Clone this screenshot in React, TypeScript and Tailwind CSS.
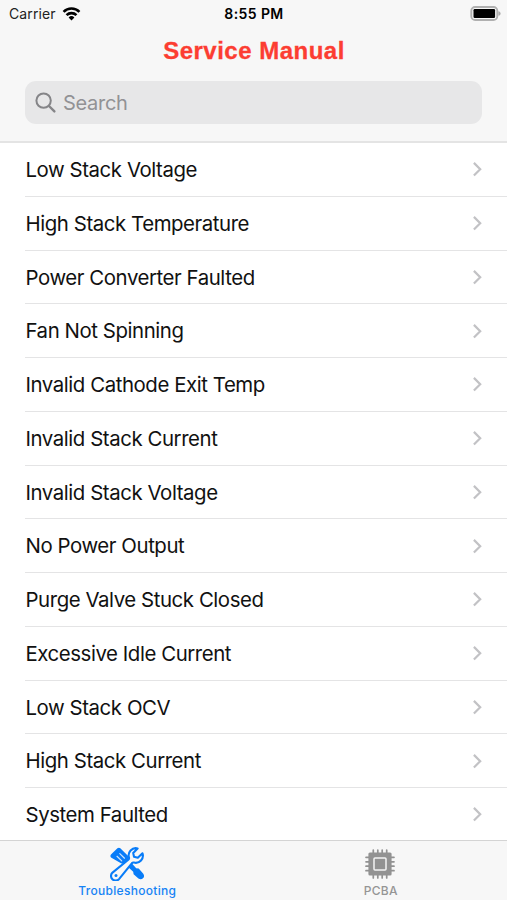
import React, { useState } from 'react';

interface Tab {
  id: string;
  label: string;
  icon: React.ReactNode;
}

const FAULTS = [
  'Low Stack Voltage',
  'High Stack Temperature',
  'Power Converter Faulted',
  'Fan Not Spinning',
  'Invalid Cathode Exit Temp',
  'Invalid Stack Current',
  'Invalid Stack Voltage',
  'No Power Output',
  'Purge Valve Stuck Closed',
  'Excessive Idle Current',
  'Low Stack OCV',
  'High Stack Current',
  'System Faulted',
];

const WifiIcon = () => (
  <svg width="19" height="14" viewBox="0 0 20 15" fill="none" stroke="#000" strokeWidth="2.8">
    <path d="M1.5 5.2a12 12 0 0 1 17 0" />
    <path d="M4.7 8.7a7.5 7.5 0 0 1 10.6 0" />
    <path d="M10 14.4 6.9 11.3a4.4 4.4 0 0 1 6.2 0Z" fill="#000" stroke="none" />
  </svg>
);

const BatteryIcon = () => (
  <svg width="32" height="16" viewBox="0 0 32 16">
    <rect x="1.3" y="1" width="26" height="13" rx="3.8" fill="#f7f7f7" stroke="#b0b0b0" strokeWidth="1.9" />
    <rect x="3.5" y="3" width="21.6" height="9" rx="1.2" fill="#000" />
    <path d="M28.4 5.2c1.5.4 2.2 1.2 2.2 2.3s-.7 1.9-2.2 2.3Z" fill="#aaa" />
  </svg>
);

const SearchIcon = () => (
  <svg width="22" height="22" viewBox="0 0 22 22" fill="none" stroke="#858588" strokeWidth="2" strokeLinecap="round">
    <circle cx="8.6" cy="8.6" r="7.2" />
    <path d="m14 14 5.4 5.4" strokeWidth="2.4" />
  </svg>
);

const ChevronIcon = () => (
  <svg width="10" height="16" viewBox="0 0 10 16" fill="none" stroke="#c2c2c5" strokeWidth="2.2">
    <path d="m.9 1.9 6.3 6.3-6.3 6.3" />
  </svg>
);

// Screwdriver crossed under an outlined wrench
const ToolsIcon = () => (
  <svg width="34" height="34" viewBox="0 0 34 34" fill="none" strokeLinejoin="round">
    <path d="M1 7.6 7.4 1.2Q8.9.2 10.3 1.2l7.6 7.6q1.3 1.6.3 3.4l8 9.1 2.5.3 4.6 5.1q1.6 2.7-.3 4.6t-4.6.3l-4.8-4.3-.4-2.6-9.5-8.8q-2 1.2-3.6-.1L1 10.5q-1.2-1.4 0-2.9Z" fill="#087cf8" />
    <path d="m7 9.3 4.7 4.6M9.8 6.6l4.7 4.6" stroke="#cfe4fb" strokeWidth="1.2" strokeLinecap="round" />
    <path
      d="M27.6 1.4a7.2 7.2 0 0 0-8.6 9.2q.3 1.2-.7 2.1L2.5 25.6a4.6 4.6 0 1 0 6.5 6.5L21.8 16.3q.9-1 2.2-.7a7.2 7.2 0 0 0 8.5-9.3l-4.7 4.4-3.8-1-.8-3.8Z"
      fill="#f7f7f7"
      stroke="#087cf8"
      strokeWidth="2.1"
    />
    <circle cx="6" cy="28.4" r="1.5" fill="#087cf8" />
  </svg>
);

const ChipIcon = () => (
  <svg width="30" height="30" viewBox="0 0 30 30" fill="none" stroke="#929292">
    <path d="M8.3 1v28M12.8 1v28M17.2 1v28M21.7 1v28M1 8.3h28M1 12.8h28M1 17.2h28M1 21.7h28" strokeWidth="1.7" strokeLinecap="round" />
    <rect x="3.4" y="3.4" width="23.2" height="23.2" rx="1.5" fill="#929292" stroke="none" />
    <rect x="9" y="9" width="12" height="12" rx="1" stroke="#f4f4f4" strokeWidth="1.5" />
  </svg>
);

const TABS: Tab[] = [
  { id: 'troubleshooting', label: 'Troubleshooting', icon: <ToolsIcon /> },
  { id: 'pcba', label: 'PCBA', icon: <ChipIcon /> },
];

const App: React.FC = () => {
  const [query, setQuery] = useState('');
  const [activeTab, setActiveTab] = useState('troubleshooting');

  const visible = FAULTS.filter(f => f.toLowerCase().includes(query.toLowerCase()));

  return (
    <div className="flex h-[900px] w-[507px] flex-col overflow-hidden bg-white font-['Inter',sans-serif] text-black">
      <header className="h-[143px] shrink-0 border-b-2 border-[#e4e4e4] bg-[#f7f7f7]">
        {/* Status bar */}
        <div className="grid h-[27px] grid-cols-3 items-center pl-[9px] pr-[5px]">
          <div className="flex items-center gap-[6px] text-[14px] tracking-[0.1px] text-[#222]">
            <span>Carrier</span>
            <WifiIcon />
          </div>
          <div className="-ml-[3px] text-center text-[14px] font-semibold tracking-[0.4px]">8:55 PM</div>
          <div className="flex justify-end">
            <BatteryIcon />
          </div>
        </div>

        <h1 className="h-[54px] pl-px text-center font-['Liberation_Sans',sans-serif] text-[24px] leading-[48px] font-bold tracking-[0.5px] text-[#fc3d32] [-webkit-text-stroke:0.3px_#fc3d32]">
          Service Manual
        </h1>

        <label className="mx-[25px] flex h-[43px] items-center gap-[6px] rounded-[11px] bg-[#e7e7e8] pl-[10px]">
          <SearchIcon />
          <input
            value={query}
            onChange={e => setQuery(e.target.value)}
            placeholder="Search"
            className="min-w-0 flex-1 bg-transparent text-[20px] tracking-[-0.3px] outline-none placeholder:text-[#929295]"
          />
        </label>
      </header>

      <ul className="min-h-0 flex-1 overflow-hidden">
        {visible.map(fault => (
          <li key={fault} className="ml-[25px] flex h-[53.75px] items-center justify-between border-b border-[#e4e4e5] pr-6">
            <span className="pt-[2px] pl-[0.5px] text-[20.4px] tracking-[-0.43px] text-[#111]">{fault}</span>
            <ChevronIcon />
          </li>
        ))}
      </ul>

      <nav className="grid h-[60px] shrink-0 grid-cols-2 border-t border-[#d4d4d4] bg-[#f7f7f7]">
        {TABS.map(tab => (
          <button
            key={tab.id}
            type="button"
            onClick={() => setActiveTab(tab.id)}
            className={`flex flex-col items-center text-[12px] font-medium tracking-[0.3px] ${
              activeTab === tab.id ? 'text-[#1683f5]' : 'text-[#959595]'
            }`}
          >
            <span className="mt-[5px] flex h-[35px] items-center">{tab.icon}</span>
            <span className="pl-px leading-[20px]">{tab.label}</span>
          </button>
        ))}
      </nav>
    </div>
  );
};

export default App;
